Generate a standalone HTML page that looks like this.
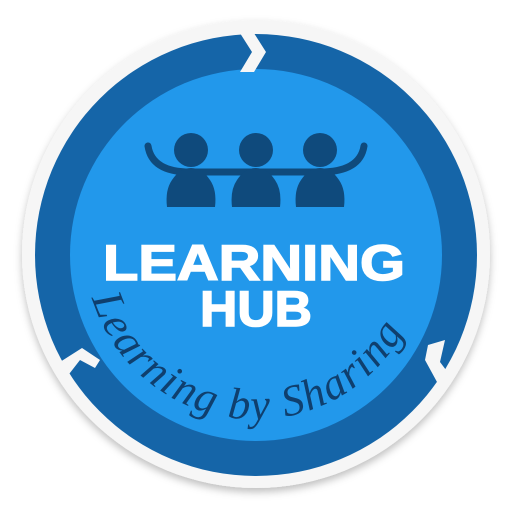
<!DOCTYPE html>
<html><head><style>
html,body{margin:0;padding:0;background:#fff;}
</style></head><body>
<svg width="512" height="512" viewBox="0 0 512 512" xmlns="http://www.w3.org/2000/svg">
<defs>
<filter id="sh" x="-10%" y="-10%" width="120%" height="125%"><feDropShadow dx="0" dy="4" stdDeviation="4" flood-color="#000" flood-opacity="0.25"/></filter>
<path id="arc" d="M 92 298 A 170 170 0 0 0 420 290"/>
</defs>
<circle cx="256" cy="254" r="234" fill="#f6f6f6" filter="url(#sh)"/>
<circle cx="256" cy="255" r="221" fill="#1565a8"/>
<circle cx="256" cy="255" r="186" fill="#2298eb"/>
<polygon points="238,30 252,30 266,52 254,72 240,72 252,52" fill="#f6f6f6"/>
<polygon points="60,362 82,348 100,360 95,368 80,360 66,378" fill="#f6f6f6"/>
<polygon points="428,345 445,340 440,362 452,378 437,382 425,360" fill="#f6f6f6"/>
<g fill="#0f4a7c">
<path d="M148 146 Q152 172 190 172 L320 172 Q360 172 364 146" fill="none" stroke="#0f4a7c" stroke-width="7" stroke-linecap="round"/>
<circle cx="191" cy="150" r="17"/>
<circle cx="256" cy="150" r="17"/>
<circle cx="320" cy="150" r="17"/>
<path d="M167 207 Q165 190 172 180 Q180 168 191 168 Q202 168 210 180 Q217 190 215 207 Z"/>
<path d="M232 207 Q230 190 237 180 Q245 168 256 168 Q267 168 275 180 Q282 190 280 207 Z"/>
<path d="M296 207 Q294 190 301 180 Q309 168 320 168 Q331 168 339 180 Q346 190 344 207 Z"/>
</g>
<text x="254" y="280" text-anchor="middle" font-family="Liberation Sans, sans-serif" font-weight="bold" font-size="50" fill="#fff" textLength="302" lengthAdjust="spacingAndGlyphs" stroke="#fff" stroke-width="1.5">LEARNING</text>
<text x="256" y="326" text-anchor="middle" font-family="Liberation Sans, sans-serif" font-weight="bold" font-size="50" fill="#fff" textLength="112" lengthAdjust="spacingAndGlyphs" stroke="#fff" stroke-width="1.5">HUB</text>
<text font-family="Liberation Serif, serif" font-style="italic" font-size="44" fill="#0f3f6e" letter-spacing="1"><textPath href="#arc" startOffset="0%" textLength="400" lengthAdjust="spacing">Learning by Sharing</textPath></text>
</svg>
</body></html>
